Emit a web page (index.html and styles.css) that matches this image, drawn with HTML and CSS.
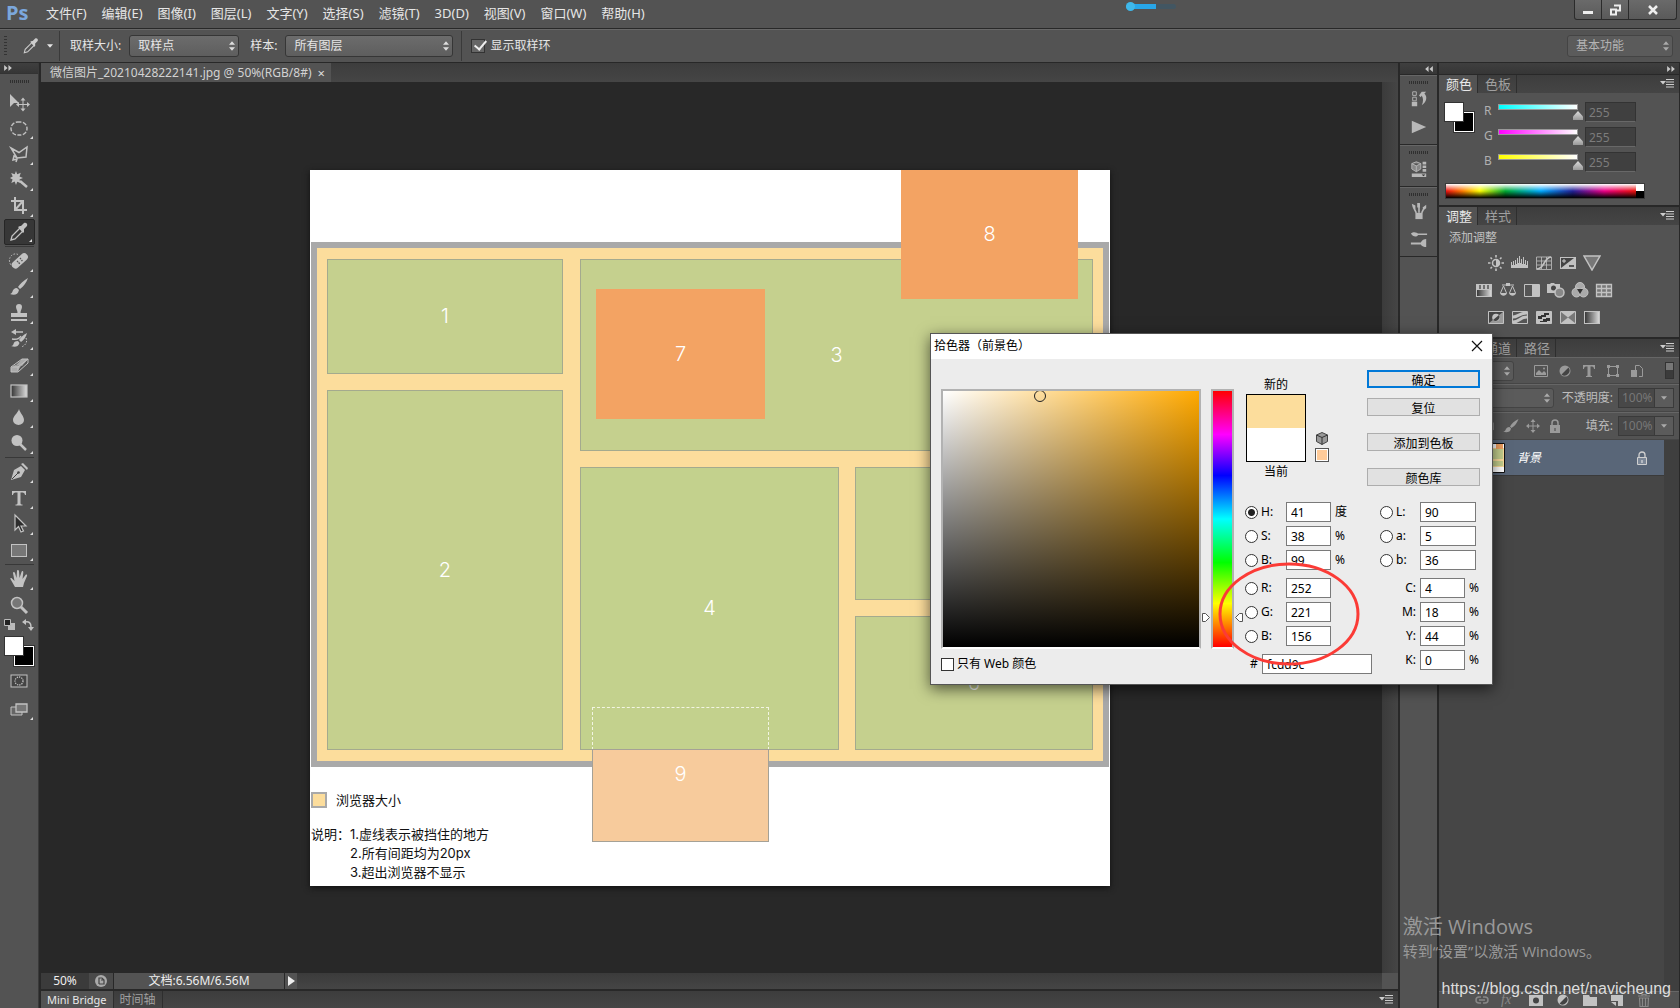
FILE: index.html
```html
<!DOCTYPE html>
<html lang="zh-CN">
<head>
<meta charset="utf-8">
<title>微信图片_20210428222141.jpg @ 50%(RGB/8#)</title>
<link rel="stylesheet" href="styles.css">
</head>
<body>
<svg class="sprite" aria-hidden="true">
  <defs>
    <linearGradient id="g-fade"><stop offset="0" stop-color="#333"/><stop offset="1" stop-color="#ddd"/></linearGradient>
  </defs>
  <symbol id="updown" viewBox="0 0 7 11"><path d="M3.500 0 7 4H0zM3.500 11 7 7H0z" fill="currentColor"/></symbol>
  <symbol id="down" viewBox="0 0 7 4"><path d="M0 0h7L3.500 4z" fill="currentColor"/></symbol>
  <symbol id="dbl-right" viewBox="0 0 9 7"><path d="M0 0l4 3.500L0 7zM5 0l4 3.500L5 7z" fill="currentColor"/></symbol>
  <symbol id="dbl-left" viewBox="0 0 9 7"><path d="M4 0L0 3.500 4 7zM9 0L5 3.500 9 7z" fill="currentColor"/></symbol>
  <symbol id="panel-menu" viewBox="0 0 14 9"><path d="M0 2h6L3 5.500zM6 0h8v1H6zM6 2.500h8v1H6zM6 5h8v1H6zM6 7.500h8v1H6z" fill="currentColor"/></symbol>

  <symbol id="move" viewBox="0 0 24 24"><path d="M3 4v13l4-4h5z" fill="currentColor"/><path d="M16 9v11M10.500 14.500h11" stroke="currentColor" fill="none"/><path d="M16 7.500l2.500 3h-5zM16 21.500l2.500-3h-5zM9 14.500l3-2.500v5zM23 14.500l-3-2.500v5z" fill="currentColor"/></symbol>
  <symbol id="ellipse" viewBox="0 0 24 24"><rect x="4" y="6" width="16" height="13" rx="6.500" fill="none" stroke="currentColor" stroke-width="1.400" stroke-dasharray="4 1.500"/></symbol>
  <symbol id="lasso" viewBox="0 0 24 24"><path d="M4 6l8 4.500L20 5l-1 10-9 1zM10 16l-3-2-1 4 4-1-1 3" fill="none" stroke="currentColor" stroke-width="1.500"/></symbol>
  <symbol id="wand" viewBox="0 0 24 24"><path d="M9 3l1.200 3.300 3.600-1.500-1.300 3.600 3.500 1.600-3.500 1.600 1 3.400-3.300-1.300L9 17l-1.300-3.500L4.300 15l1.300-3.600L3 10l2.700-1.500L4.200 5l3.500 1.300z" fill="currentColor"/><path d="M13 13l7 6" stroke="currentColor" stroke-width="2.500"/></symbol>
  <symbol id="crop" viewBox="0 0 24 24"><path d="M8 3v13h12M4 7h12v13M8 16l8-9" fill="none" stroke="currentColor" stroke-width="2"/></symbol>
  <symbol id="dropper" viewBox="0 0 24 24"><path d="M4 20l1-4 8-8 3 3-8 8z" fill="none" stroke="currentColor" stroke-width="1.300"/><path d="M11 7l2-1 1 0 3-3c2-1 4 1 3 3l-3 3v3l-1 1z" fill="currentColor"/></symbol>
  <symbol id="heal" viewBox="0 0 24 24"><path d="M11 5.500a6 6.500 0 1 0-5 12" fill="none" stroke="currentColor" stroke-dasharray="1.500 1.500"/><rect x="3.500" y="8" width="19" height="7.500" rx="3.700" transform="rotate(-42 13 12)" fill="currentColor"/><path d="M10 12l3 3M13 9l3 4M11.500 13.500l.5.5" stroke="#555" stroke-width="1.300" stroke-dasharray="1.500 1"/></symbol>
  <symbol id="brush" viewBox="0 0 24 24"><path d="M21 3c-5 3-8 6-10 9l2 2c4-3 6-6 8-11zM10 13c-3 0-4 2-4.500 3.500S4 19 3 19c4 1.500 8 1 9-4z" fill="currentColor"/></symbol>
  <symbol id="stamp" viewBox="0 0 24 24"><path d="M12 3a3 3 0 0 1 3 3c0 2-1.500 3-1.500 6H20v4H4v-4h6.500C10.500 9 9 8 9 6a3 3 0 0 1 3-3zM4 18h16v2H4z" fill="currentColor"/></symbol>
  <symbol id="history" viewBox="0 0 24 24"><path d="M20 6c-4 2-6 4-8 7l2 2c3-2 5-5 6-9zM11 14c-3 0-4 1-4.500 3S4 19 4 19c4 1.500 7 1 8.500-3z" fill="currentColor"/><path d="M16 5H8M5 12c6 1 8-1 9-3" fill="none" stroke="currentColor" stroke-width="1.500"/><path d="M4 5l5-3v6z" fill="currentColor"/><path d="M19 11c2 4-1 8-5 9" fill="none" stroke="currentColor" stroke-dasharray="1.500 1.500"/></symbol>
  <symbol id="eraser" viewBox="0 0 24 24"><path d="M9 12l6-6h6l-6 7zM4 15l4-3 6 1-4 6H4z" fill="#aaa"/><path d="M4 14l11-8h6v4l-10 9H4zM4 14h7l10-8M11 14v5" fill="none" stroke="currentColor"/></symbol>
  <symbol id="gradient" viewBox="0 0 24 24"><rect x="4" y="6" width="16" height="12" fill="url(#g-fade)" stroke="currentColor" stroke-width="1.200"/></symbol>
  <symbol id="blur" viewBox="0 0 24 24"><path d="M12 4c1 4 5 7 5 11a5.500 5 0 0 1-11 0c0-4 5-7 6-11z" fill="currentColor"/></symbol>
  <symbol id="dodge" viewBox="0 0 24 24"><circle cx="10" cy="9.500" r="5.500" fill="currentColor"/><path d="M13 13l6 6" stroke="currentColor" stroke-width="2.500"/></symbol>
  <symbol id="pen" viewBox="0 0 24 24"><path d="M4 20l3-10 7-4 4 4-4 7zM14 4l2-1 5 5-1 2z" fill="currentColor"/><path d="M5 19l6-6" stroke="#444"/><circle cx="11.500" cy="12.500" r="1.300" fill="#444"/></symbol>
  <symbol id="type" viewBox="0 0 24 24"><path d="M5 5h14v4h-1c-.5-2-1-2.500-4.500-2.500V17c0 1.500.5 1.500 2 1.500v1h-7v-1c1.500 0 2 0 2-1.500V6.500C7 6.500 6.500 7 6 9H5z" fill="currentColor"/></symbol>
  <symbol id="select" viewBox="0 0 24 24"><path d="M8 3v15l3.500-3.500L14 20l2.500-1-2.500-5h5z" fill="#2d2d2d" stroke="currentColor" stroke-width="1.200"/></symbol>
  <symbol id="rect" viewBox="0 0 24 24"><rect x="4.500" y="6.500" width="15" height="12" fill="#777" stroke="currentColor"/></symbol>
  <symbol id="hand" viewBox="0 0 24 24"><path d="M8 20l-4-7c-1.500-2 0-2.500 1-1.500L7.500 14 6 6c0-1.500 1.500-1.500 2 0l1.500 5L10 4c0-1.500 1.800-1.500 2 0l.5 7L14.500 5c.5-1.500 2-1 1.800.5L15.500 12l3-4c1-1 2 0 1.500 1l-3 7-1 4z" fill="currentColor"/></symbol>
  <symbol id="zoomt" viewBox="0 0 24 24"><circle cx="10" cy="10" r="5.500" fill="#777" stroke="currentColor" stroke-width="1.500"/><path d="M14 14l6 6" stroke="currentColor" stroke-width="3"/></symbol>
  <symbol id="mask" viewBox="0 0 24 24"><rect x="4" y="6" width="16" height="12" fill="#444" stroke="currentColor"/><circle cx="12" cy="12" r="4" fill="none" stroke="currentColor" stroke-width="1.300" stroke-dasharray="1.300 1"/></symbol>
  <symbol id="screen" viewBox="0 0 24 24"><path d="M4 10h11v8H4z" fill="#666" stroke="currentColor"/><path d="M9 7h11v8H9z" fill="#777" stroke="currentColor" stroke-width="1.300"/></symbol>

  <symbol id="actions" viewBox="0 0 20 20"><path d="M3 2h4v4H3zM3 8h4v4H3z" fill="none" stroke="currentColor"/><path d="M2 13h6v5H2zM10 6l3-4 5 0-2 2c4 4 2 10-3 13 2-4 2-8 0-11l-1 2z" fill="currentColor"/></symbol>
  <symbol id="play" viewBox="0 0 20 20"><path d="M2 3l16 7-16 7z" fill="currentColor"/></symbol>
  <symbol id="props" viewBox="0 0 20 20"><path d="M7 2l5 2v6l-5 3-5-3V4zM2 4l5 2.500L12 4M7 6.500V13" fill="#888" stroke="currentColor"/><path d="M14 2h4v3h-4zM14 6h4v3h-4zM14 10h4v3h-4zM2 15h16v4H2z" fill="currentColor"/><path d="M13 16h4l-2 2z" fill="#333"/></symbol>
  <symbol id="brushes" viewBox="0 0 20 20"><path d="M6 12h8v7H6z" fill="currentColor"/><path d="M7 12L4 6M10 12V2M13 12l3-6" stroke="currentColor" stroke-width="1.800"/><path d="M2 2l4 2v4L3 6zM14 6l4-3v4l-3 2zM8 1h3v5H8z" fill="currentColor"/></symbol>
  <symbol id="presets" viewBox="0 0 20 20"><path d="M1 4c3-3 7-1 8 0h10v1.500H9c-2 3-6 2-8-1.500zM1 14h11c1-3 4-4 6-4v9c-2 0-5-1-6-3H1z" fill="currentColor"/></symbol>

  <symbol id="a-sun" viewBox="0 0 18 16"><circle cx="9" cy="8" r="3.500" fill="none" stroke="currentColor" stroke-width="1.500"/><path d="M9 4.500a3.500 3.500 0 0 1 0 7z" fill="currentColor"/><path d="M9 0v2.500M9 13.500V16M1 8h2.500M14.500 8H17M3.500 2.500l1.500 1.500M13 12l1.500 1.500M3.500 13.500L5 12M13 4l1.500-1.500" stroke="currentColor" stroke-width="1.600"/></symbol>
  <symbol id="a-levels" viewBox="0 0 18 16"><path d="M0 13V7h1v3h1V6h1v4h1V5h1v4h1V3h1v5h1V1h1v7h1V4h1v5h1V2h1v7h1V5h1v5h1V6h1v7z" fill="currentColor"/></symbol>
  <symbol id="a-curves" viewBox="0 0 18 16"><path d="M1.500 2v12.500h15V2zM6.500 2v12M11.500 2v12M2 6h14M2 10h14" fill="none" stroke="currentColor" stroke-width=".8"/><path d="M2 14C10 14 8 3 16 2" fill="none" stroke="currentColor" stroke-width="1.700"/></symbol>
  <symbol id="a-expo" viewBox="0 0 18 16"><path d="M1 2h16v12H1z" fill="currentColor"/><path d="M2 13V3h13z" fill="#444"/><path d="M3 6h4M5 4v4" stroke="#ccc"/><path d="M10 11h5" stroke="#333" stroke-width="1.500"/></symbol>
  <symbol id="a-vib" viewBox="0 0 18 16"><path d="M1 1h16L9 15z" fill="#777" stroke="currentColor" stroke-width="1.500"/></symbol>
  <symbol id="a-hue" viewBox="0 0 18 16"><rect x="1.500" y="2.500" width="15" height="12" fill="url(#g-fade)" stroke="currentColor"/><path d="M1 2h16v6H1z" fill="currentColor"/><path d="M5 3v4M9 3v4M13 3v4" stroke="#555" stroke-width="1.500"/></symbol>
  <symbol id="a-balance" viewBox="0 0 18 16"><path d="M9 1v3M3 3h12M4.500 4L1.500 11M4.500 4l3 7M13.500 4l-3 7M13.500 4l3 7" stroke="currentColor" fill="none"/><path d="M1 11h7c-1 3.500-6 3.500-7 0zM10 11h7c-1 3.500-6 3.500-7 0zM7 1h4v3H7z" fill="currentColor"/></symbol>
  <symbol id="a-bw" viewBox="0 0 18 16"><path d="M1.500 2.500h15v12h-15z" fill="#555" stroke="currentColor"/><path d="M9 3h7v11H9z" fill="currentColor"/></symbol>
  <symbol id="a-photo" viewBox="0 0 18 16"><path d="M0 2h3l1-1h3l1 1h5v9H0z" fill="currentColor"/><circle cx="6.500" cy="6" r="2.500" fill="#444"/><circle cx="12.500" cy="10.500" r="4.500" fill="#888" stroke="currentColor" stroke-width="1.500"/></symbol>
  <symbol id="a-mix" viewBox="0 0 18 16"><g fill="#aaa" stroke="currentColor"><circle cx="9" cy="5" r="4.500"/><circle cx="5.500" cy="10.500" r="4.500"/><circle cx="12.500" cy="10.500" r="4.500"/></g><path d="M6 7h6l-3 5z" fill="#333"/></symbol>
  <symbol id="a-lut" viewBox="0 0 18 16"><path d="M1.500 2.500h15v12h-15zM6.500 2v12M11.500 2v12M2 6.500h14M2 10.500h14" fill="#777" stroke="currentColor" stroke-width="1.300"/></symbol>
  <symbol id="a-invert" viewBox="0 0 18 16"><path d="M1.500 2.500h15v12h-15z" fill="#999" stroke="currentColor"/><path d="M2 14L16 3H2z" fill="#444"/><circle cx="9" cy="8.500" r="3.800" fill="currentColor"/><path d="M6 11l6-5a4 4 0 0 1-6 5z" fill="#444"/></symbol>
  <symbol id="a-poster" viewBox="0 0 18 16"><path d="M1.500 2.500h15v12h-15z" fill="#555" stroke="currentColor"/><path d="M2 8c5 0 6-4 14-4" stroke="currentColor" stroke-width="3" fill="none"/><path d="M2 13c6 0 7-5 14-5" stroke="currentColor" stroke-width="3" fill="none"/></symbol>
  <symbol id="a-thresh" viewBox="0 0 18 16"><path d="M1.500 2.500h15v12h-15z" fill="currentColor" stroke="currentColor"/><path d="M3 7h3V6h3V4h5v2h-3v2H7v2H3zM5 12h3v-2h3V9h4v3h-3v1H5z" fill="#333"/></symbol>
  <symbol id="a-sel" viewBox="0 0 18 16"><path d="M1.500 2.500h15v12h-15z" fill="#777" stroke="currentColor"/><path d="M2 3l7 5.500L16 3zM2 14l7-5.500 7 5.500z" fill="currentColor"/></symbol>
  <symbol id="a-map" viewBox="0 0 18 16"><rect x="1.500" y="2.500" width="15" height="12" fill="url(#g-fade)" stroke="currentColor"/></symbol>

  <symbol id="l-img" viewBox="0 0 16 14"><path d="M1.500 1.500h13v11h-13z" fill="none" stroke="currentColor"/><path d="M3 11V9l3-3 3 3 2-2 2 2v2z" fill="currentColor"/><circle cx="11" cy="4.500" r="1" fill="currentColor"/></symbol>
  <symbol id="l-adj" viewBox="0 0 16 14"><circle cx="8" cy="7" r="5.500" fill="currentColor"/><path d="M4.500 10.500l7-7a5 5 0 0 1-7 7z" fill="#444"/></symbol>
  <symbol id="l-type" viewBox="0 0 16 14"><path d="M2 1h12v4h-1c0-2-1-2.500-3.500-2.500V11c0 1 .5 1 1.500 1v1H5v-1c1 0 1.500 0 1.500-1V2.500C4 2.500 3 3 3 5H2z" fill="currentColor"/></symbol>
  <symbol id="l-shape" viewBox="0 0 16 14"><path d="M3.500 2.500h9v9h-9z" fill="none" stroke="currentColor"/><path d="M2 1h3v3H2zM11 1h3v3h-3zM2 10h3v3H2zM11 10h3v3h-3z" fill="currentColor"/></symbol>
  <symbol id="l-smart" viewBox="0 0 16 14"><path d="M6.500 7V1.500h4l3 3v8H10" fill="none" stroke="currentColor"/><path d="M2 6h6v7H2z" fill="currentColor"/></symbol>
  <symbol id="l-brush" viewBox="0 0 16 14"><path d="M15.500 0C11 2 8.500 5 7 7.500L8.500 9C12 7 14 4 15.500 0zM6.500 8C4 8 3 9.500 2.500 11S1 12.500 0 12.500C3 14 7.500 13.500 8 9.500z" fill="currentColor"/></symbol>
  <symbol id="l-lock" viewBox="0 0 16 14"><path d="M3 6h10v8H3z" fill="currentColor"/><path d="M5 6V4c0-4 6-4 6 0v2" fill="none" stroke="currentColor" stroke-width="1.500"/><path d="M7.500 9h1v3h-1z" fill="#444"/></symbol>
  <symbol id="l-locked" viewBox="0 0 16 14"><path d="M3.500 6.500h9v7h-9z" fill="#7c8797" stroke="currentColor"/><path d="M5 6V4c0-4 6-4 6 0v2" fill="none" stroke="currentColor" stroke-width="1.300"/><path d="M7.500 9h1v3h-1z" fill="#eee"/></symbol>
  <symbol id="l-move" viewBox="0 0 16 14"><path d="M8 2v10M3 7h10" stroke="currentColor"/><path d="M8 0l2.500 3h-5zM8 14l2.500-3h-5zM1 7l3-2.500v5zM15 7l-3-2.500v5z" fill="currentColor"/></symbol>
  <symbol id="l-link" viewBox="0 0 16 14"><path d="M7 4H5a3 3 0 0 0 0 6h2M9 4h2a3 3 0 0 1 0 6H9M5 7h6" fill="none" stroke="currentColor" stroke-width="1.500"/></symbol>
  <symbol id="l-mask" viewBox="0 0 16 14"><path d="M1 2h14v11H1z" fill="currentColor"/><circle cx="8" cy="7.500" r="3" fill="#444"/></symbol>
  <symbol id="l-folder" viewBox="0 0 16 14"><path d="M1 2h6l1 2h7v9H1z" fill="currentColor"/></symbol>
  <symbol id="l-new" viewBox="0 0 16 14"><path d="M2 2h12v11H9V8H2z" fill="currentColor"/><path d="M2 9h5v4z" fill="currentColor"/></symbol>
  <symbol id="l-trash" viewBox="0 0 16 14"><path d="M2 3h12M6 3V1.500h4V3M3.500 5l.5 8.500h8l.5-8.500zM6.500 5v8M9.500 5v8" fill="none" stroke="currentColor" stroke-width="1.200"/></symbol>
</svg>

<div class="app">
  <header class="menubar">
    <span class="logo">Ps</span>
    <nav class="menus">
      <button>文件(F)</button><button>编辑(E)</button><button>图像(I)</button><button>图层(L)</button><button>文字(Y)</button><button>选择(S)</button><button>滤镜(T)</button><button>3D(D)</button><button>视图(V)</button><button>窗口(W)</button><button>帮助(H)</button>
    </nav>
    <div class="win-buttons">
      <button aria-label="最小化"><svg width="12" height="12" viewBox="0 0 12 12"><path d="M1 7h10v3H1z" fill="#eee"/></svg></button>
      <button aria-label="还原"><svg width="12" height="12" viewBox="0 0 12 12"><path d="M5 1.500h6v5H8M2 5.500h5v5H2z" fill="none" stroke="#eee" stroke-width="2"/></svg></button>
      <button class="wide" aria-label="关闭"><svg width="12" height="12" viewBox="0 0 12 12"><path d="M2 2l8 8M10 2l-8 8" stroke="#eee" stroke-width="2.500"/></svg></button>
    </div>
    <div class="progress"><i></i></div>
  </header>

  <div class="options">
    <span class="grip-v"></span>
    <svg class="opt-tool" width="20" height="20"><use href="#dropper"/></svg>
    <svg class="opt-caret" width="6" height="4"><use href="#down"/></svg>
    <span class="opt-sep"></span>
    <label for="size">取样大小:</label>
    <span class="drop size"><select id="size"><option>取样点</option></select><svg width="6" height="10"><use href="#updown"/></svg></span>
    <label for="sample">样本:</label>
    <span class="drop sample"><select id="sample"><option>所有图层</option></select><svg width="6" height="10"><use href="#updown"/></svg></span>
    <span class="opt-sep"></span>
    <label class="ring"><input type="checkbox" checked>显示取样环</label>
    <span class="drop space"><select aria-label="工作区"><option>基本功能</option></select><svg width="6" height="10"><use href="#updown"/></svg></span>
  </div>

  <div class="work">
    <aside class="toolbar">
      <div class="dock-head"><svg width="8" height="6"><use href="#dbl-right"/></svg></div>
      <div class="grip"></div>
      <button class="tool" aria-label="移动"><svg><use href="#move"/></svg></button>
      <button class="tool more" aria-label="选框"><svg><use href="#ellipse"/></svg></button>
      <button class="tool more" aria-label="套索"><svg><use href="#lasso"/></svg></button>
      <button class="tool more" aria-label="魔棒"><svg><use href="#wand"/></svg></button>
      <button class="tool more" aria-label="裁剪"><svg><use href="#crop"/></svg></button>
      <button class="tool more on" aria-label="吸管"><svg><use href="#dropper"/></svg></button>
      <hr>
      <button class="tool more" aria-label="修复"><svg><use href="#heal"/></svg></button>
      <button class="tool more" aria-label="画笔"><svg><use href="#brush"/></svg></button>
      <button class="tool more" aria-label="图章"><svg><use href="#stamp"/></svg></button>
      <button class="tool more" aria-label="历史画笔"><svg><use href="#history"/></svg></button>
      <button class="tool more" aria-label="橡皮擦"><svg><use href="#eraser"/></svg></button>
      <button class="tool more" aria-label="渐变"><svg><use href="#gradient"/></svg></button>
      <button class="tool more" aria-label="模糊"><svg><use href="#blur"/></svg></button>
      <button class="tool more" aria-label="减淡"><svg><use href="#dodge"/></svg></button>
      <hr>
      <button class="tool more" aria-label="钢笔"><svg><use href="#pen"/></svg></button>
      <button class="tool more" aria-label="文字"><svg><use href="#type"/></svg></button>
      <button class="tool more" aria-label="路径选择"><svg><use href="#select"/></svg></button>
      <button class="tool more" aria-label="矩形"><svg><use href="#rect"/></svg></button>
      <hr>
      <button class="tool more" aria-label="抓手"><svg><use href="#hand"/></svg></button>
      <button class="tool" aria-label="缩放"><svg><use href="#zoomt"/></svg></button>
      <div class="mini">
        <svg width="11" height="11" viewBox="0 0 11 11"><path d="M4 4h7v7H4z" fill="#bbb"/><path d="M.5.500h6v6h-6z" fill="#222" stroke="#bbb"/></svg>
        <svg width="12" height="12" viewBox="0 0 12 12"><path d="M3 3c4-1 6 1 6 5" fill="none" stroke="#c4c4c4" stroke-width="1.500"/><path d="M0 3l4-3v6zM9 12l-3-4h6z" fill="#c4c4c4"/></svg>
      </div>
      <div class="swatches"><i class="bg"></i><i class="fg"></i></div>
      <button class="tool" aria-label="快速蒙版"><svg><use href="#mask"/></svg></button>
      <button class="tool more" aria-label="屏幕模式"><svg><use href="#screen"/></svg></button>
    </aside>

    <main class="center">
      <div class="tabbar doc-tabs"><div class="doc-tab"><span>微信图片_20210428222141.jpg @ 50%(RGB/8#)</span><button aria-label="关闭">×</button></div></div>
      <div class="stage">
        <div class="viewport">
          <section class="artboard">
            <div class="board">
              <div class="col-left"><div class="cell c1">1</div><div class="cell c2">2</div></div>
              <div class="col-right">
                <div class="cell c3">3</div>
                <div class="lower">
                  <div class="cell c4">4</div>
                  <div class="pair"><div class="cell">5</div><div class="cell">6</div></div>
                </div>
              </div>
            </div>
            <div class="block b7">7</div>
            <div class="block b8">8</div>
            <div class="dashed"></div>
            <div class="block b9">9</div>
            <div class="legend"><i></i>浏览器大小</div>
            <div class="notes"><span>说明：</span><p>1.虚线表示被挡住的地方<br>2.所有间距均为20px<br>3.超出浏览器不显示</p></div>
          </section>
        </div>
        <div class="vscroll"></div>
      </div>
      <div class="status">
        <span class="pct">50%</span>
        <span class="share"><svg width="12" height="12" viewBox="0 0 12 12"><circle cx="6" cy="6" r="6" fill="#aaa"/><path d="M4 9V3h3l2 2v4H4M6 5h3" fill="none" stroke="#444" stroke-width="1.200"/></svg></span>
        <span class="docsize">文档:6.56M/6.56M</span>
        <button class="go" aria-label="状态菜单"><svg width="7" height="10" viewBox="0 0 7 10"><path d="M0 0l7 5-7 5z" fill="#eee"/></svg></button>
        <span class="hscroll"></span><span class="corner"></span>
      </div>
      <div class="tabbar bottom-tabs"><button class="on">Mini Bridge</button><button>时间轴</button><svg class="pm" width="14" height="9"><use href="#panel-menu"/></svg></div>
    </main>

    <aside class="dock">
      <div class="strip">
        <div class="dock-head left"><svg width="8" height="6"><use href="#dbl-left"/></svg></div>
        <div class="strip-group"><div class="grip"></div><button aria-label="历史记录"><svg><use href="#actions"/></svg></button><button aria-label="动作"><svg><use href="#play"/></svg></button></div>
        <div class="strip-group"><div class="grip"></div><button aria-label="属性"><svg><use href="#props"/></svg></button></div>
        <div class="strip-group"><div class="grip"></div><button aria-label="画笔"><svg><use href="#brushes"/></svg></button><button aria-label="画笔预设"><svg><use href="#presets"/></svg></button></div>
        <div class="strip-rest"></div>
      </div>
      <div class="panels">
        <div class="dock-head right"><svg width="8" height="6"><use href="#dbl-right"/></svg></div>
        <section class="panel color">
          <div class="tabbar"><button class="on">颜色</button><button>色板</button><svg class="pm" width="14" height="9"><use href="#panel-menu"/></svg></div>
          <div class="color-body">
            <div class="swatches"><i class="bg"></i><i class="fg"></i></div>
            <div class="rgb">
              <label for="r">R</label><input class="rc" type="range" max="255" value="255" aria-label="R"><input id="r" type="text" value="255">
              <label for="g">G</label><input class="gc" type="range" max="255" value="255" aria-label="G"><input id="g" type="text" value="255">
              <label for="b">B</label><input class="bc" type="range" max="255" value="255" aria-label="B"><input id="b" type="text" value="255">
            </div>
          </div>
          <div class="spectrum"><i></i><b></b></div>
        </section>
        <section class="panel adjust">
          <div class="tabbar"><button class="on">调整</button><button>样式</button><svg class="pm" width="14" height="9"><use href="#panel-menu"/></svg></div>
          <p>添加调整</p>
          <div class="adj-row"><svg><use href="#a-sun"/></svg><svg><use href="#a-levels"/></svg><svg><use href="#a-curves"/></svg><svg><use href="#a-expo"/></svg><svg><use href="#a-vib"/></svg></div>
          <div class="adj-row"><svg><use href="#a-hue"/></svg><svg><use href="#a-balance"/></svg><svg><use href="#a-bw"/></svg><svg><use href="#a-photo"/></svg><svg><use href="#a-mix"/></svg><svg><use href="#a-lut"/></svg></div>
          <div class="adj-row"><svg><use href="#a-invert"/></svg><svg><use href="#a-poster"/></svg><svg><use href="#a-thresh"/></svg><svg><use href="#a-sel"/></svg><svg><use href="#a-map"/></svg></div>
        </section>
        <section class="panel layers">
          <div class="tabbar"><button class="on">图层</button><button>通道</button><button>路径</button><svg class="pm" width="14" height="9"><use href="#panel-menu"/></svg></div>
          <div class="lrow filter">
            <span class="drop"><select aria-label="过滤"><option>类型</option></select><svg width="6" height="10"><use href="#updown"/></svg></span>
            <div class="licons"><svg><use href="#l-img"/></svg><svg><use href="#l-adj"/></svg><svg><use href="#l-type"/></svg><svg><use href="#l-shape"/></svg><svg><use href="#l-smart"/></svg></div>
            <span class="toggle"></span>
          </div>
          <div class="lrow">
            <span class="drop"><select aria-label="混合模式"><option>正常</option></select><svg width="6" height="10"><use href="#updown"/></svg></span>
            <label for="op">不透明度:</label><span class="pctbox"><input id="op" type="text" value="100%"><button aria-label="不透明度"><svg width="6" height="4"><use href="#down"/></svg></button></span>
          </div>
          <div class="lrow">
            <div class="licons locks"><svg><use href="#rect"/></svg><svg><use href="#l-brush"/></svg><svg><use href="#l-move"/></svg><svg><use href="#l-lock"/></svg></div>
            <label for="fill">填充:</label><span class="pctbox"><input id="fill" type="text" value="100%"><button aria-label="填充"><svg width="6" height="4"><use href="#down"/></svg></button></span>
          </div>
          <div class="layer-list">
            <div class="layer">
              <svg class="thumb" width="33" height="30" viewBox="0 0 33 30"><path d="M.5.500h32v29h-32z" fill="#fff" stroke="#111"/><path d="M1 5h31v19H1z" fill="#fcdd9c"/><path d="M2 6h8v17H2zM11 6h20v10H11zM11 18h20v5H11z" fill="#c5d08e"/><path d="M24 1h7v5h-7z" fill="#f3a363"/></svg>
              <span>背景</span><svg width="16" height="14"><use href="#l-locked"/></svg>
            </div>
            <div class="lscroll"></div>
          </div>
          <div class="lfoot"><svg class="dim"><use href="#l-link"/></svg><em>fx</em><svg><use href="#l-mask"/></svg><svg><use href="#l-adj"/></svg><svg><use href="#l-folder"/></svg><svg><use href="#l-new"/></svg><svg class="dim"><use href="#l-trash"/></svg></div>
        </section>
      </div>
    </aside>
  </div>

  <div class="activate"><strong>激活 Windows</strong><span>转到“设置”以激活 Windows。</span></div>
  <div class="credit">https://blog.csdn.net/navicheung</div>

  <form class="dialog" role="dialog" aria-label="拾色器">
    <div class="title"><span>拾色器（前景色）</span><button type="button" aria-label="关闭"><svg width="12" height="12" viewBox="0 0 12 12"><path d="M1 1l10 10M11 1L1 11" stroke="#111" stroke-width="1.200"/></svg></button></div>
    <div class="dlg-body">
      <div class="pick">
        <div class="field"><i></i></div>
        <label class="web"><input type="checkbox">只有 Web 颜色</label>
      </div>
      <div class="hue-wrap">
        <svg width="8" height="9" viewBox="0 0 8 9"><path d="M.5.500h3l4 4-4 4h-3z" fill="#fff" stroke="#555"/></svg>
        <div class="hue"></div>
        <svg width="8" height="9" viewBox="0 0 8 9"><path d="M7.500.500h-3l-4 4 4 4h3z" fill="#fff" stroke="#555"/></svg>
      </div>
      <div class="side">
        <div class="top">
          <div class="preview"><span>新的</span><div class="pv"></div><span>当前</span></div>
          <div class="safe"><svg width="12" height="13" viewBox="0 0 12 13"><path d="M6 .5l5.500 2.500v6.500L6 12.500.500 9.500V3z" fill="#999" stroke="#444"/><path d="M.5 3L6 5.500 11.500 3M6 5.500v7" fill="none" stroke="#333"/></svg><i></i></div>
          <div class="btns"><button type="button" class="ok">确定</button><button type="button">复位</button><button type="button" class="spaced">添加到色板</button><button type="button" class="spaced">颜色库</button></div>
        </div>
        <div class="nums">
          <div class="nl">
            <div class="n"><label><input type="radio" name="ch" checked>H:</label><input type="text" aria-label="H" value="41"><span>度</span></div>
            <div class="n"><label><input type="radio" name="ch">S:</label><input type="text" aria-label="S" value="38"><span>%</span></div>
            <div class="n"><label><input type="radio" name="ch">B:</label><input type="text" aria-label="B" value="99"><span>%</span></div>
            <div class="n first"><label><input type="radio" name="ch">R:</label><input type="text" aria-label="R" value="252"></div>
            <div class="n"><label><input type="radio" name="ch">G:</label><input type="text" aria-label="G" value="221"></div>
            <div class="n"><label><input type="radio" name="ch">B:</label><input type="text" aria-label="B" value="156"></div>
            <div class="hex"><label for="hex">#</label><input id="hex" type="text" value="fcdd9c"></div>
          </div>
          <div class="nr">
            <div class="n lab"><label><input type="radio" name="ch">L:</label><input type="text" aria-label="L" value="90"></div>
            <div class="n lab"><label><input type="radio" name="ch">a:</label><input type="text" aria-label="a" value="5"></div>
            <div class="n lab"><label><input type="radio" name="ch">b:</label><input type="text" aria-label="b" value="36"></div>
            <div class="n cmyk first"><label for="c">C:</label><input id="c" type="text" value="4"><span>%</span></div>
            <div class="n cmyk"><label for="m">M:</label><input id="m" type="text" value="18"><span>%</span></div>
            <div class="n cmyk"><label for="y">Y:</label><input id="y" type="text" value="44"><span>%</span></div>
            <div class="n cmyk"><label for="k">K:</label><input id="k" type="text" value="0"><span>%</span></div>
          </div>
        </div>
      </div>
    </div>
    <svg class="mark" width="144" height="106" viewBox="0 0 144 106"><ellipse cx="72" cy="53" rx="69" ry="50" fill="none" stroke="#fb3b36" stroke-width="3"/></svg>
  </form>
</div>
</body>
</html>
```
FILE: styles.css
```css
* { box-sizing: border-box; }
body {
  margin: 0;
  background: #282828;
  color: #e6e6e6;
  font: 12px/16px "Noto Sans", "Noto Sans CJK SC", sans-serif;
}
button, input, select { font: inherit; color: inherit; margin: 0; padding: 0; border: 0; border-radius: 0; background: none; }
p { margin: 0; }
svg { display: block; flex: none; }
i { display: block; }
.sprite { position: absolute; width: 0; height: 0; }

.app { position: relative; display: flex; flex-direction: column; min-height: 100vh; overflow: hidden; background: #282828; }

/* menu bar */
.menubar { position: relative; display: flex; align-items: center; height: 28px; padding: 0 0 2px 6px; background: #535353; }
.logo { width: 32px; color: #7ba7dc; font: bold 20px/26px "Open Sans", sans-serif; }
.menus { display: flex; gap: 15px; padding-left: 8px; font-size: 13px; }
.menus button { height: 26px; white-space: nowrap; }
.win-buttons { display: flex; align-self: flex-start; height: 20px; margin: 0 3px 0 auto; border: 1px solid #2b2b2b; border-top: 0; border-radius: 0 0 3px 3px; background: linear-gradient(#6a6a6a, #5a5a5a); }
.win-buttons button { display: grid; place-items: center; width: 27px; border-right: 1px solid #2b2b2b; }
.win-buttons .wide { width: 47px; border: 0; }
.progress { position: absolute; right: 504px; top: 4px; width: 50px; height: 5px; border-radius: 3px; background: linear-gradient(90deg, #28a6e8 60%, #425662 60%); }
.progress i { width: 9px; height: 9px; margin-top: -2px; border-radius: 50%; background: #3fb8ea; }

/* options bar */
.options { display: flex; align-items: center; height: 33px; margin-top: 1px; padding: 0 7px 0 4px; border-top: 1px solid #686868; background: #535353; white-space: nowrap; }
.grip-v { width: 3px; height: 20px; background: repeating-linear-gradient(#333 0 1px, transparent 1px 3px); }
.opt-tool { margin-left: 14px; color: #ccc; }
.opt-caret { margin: 0 6px; }
.opt-sep { width: 1px; height: 30px; background: #3a3a3a; }
.options label { margin: 0 8px 0 10px; }
.options .ring { display: flex; align-items: center; gap: 5px; margin-left: 9px; }
.ring input { appearance: none; width: 14px; height: 14px; border: 1px solid #333; background: #666; }
.ring input::after { content: ""; display: block; width: 5px; height: 10px; margin: -2px 0 0 5px; border: solid #eee; border-width: 0 2px 2px 0; rotate: 40deg; }
.drop { display: inline-grid; align-items: center; }
.drop > * { grid-area: 1 / 1; }
.drop select { appearance: none; width: 100%; height: 22px; padding-left: 8px; border: 1px solid #363636; border-radius: 3px; background: linear-gradient(#6c6c6c, #5e5e5e); }
.drop svg { justify-self: end; margin-right: 4px; pointer-events: none; color: #ddd; }
.size { width: 110px; margin-right: 1px; }
.sample { width: 168px; margin-right: 8px; }
.space { width: 106px; margin-left: auto; color: #b4b4b4; }
.space select, .layers .drop select { border-color: #444; background: #5b5b5b; }
.space svg, .layers .drop svg { color: #aaa; }

/* work area */
.work { display: flex; flex: 1; margin-top: 1px; }
.dock-head { display: flex; flex: none; align-items: center; height: 11px; margin-bottom: 1px; padding-left: 4px; background: linear-gradient(#3f3f3f, #363636); color: #c8c8c8; }
.grip { width: 20px; height: 3px; margin: 0 auto; background: repeating-linear-gradient(90deg, #2f2f2f 0 1px, transparent 1px 2px); }
.toolbar { width: 39px; padding-left: 1px; margin-right: 2px; background: #535353; border-right: 1px solid #3a3a3a; }
.toolbar .dock-head { margin-left: -1px; border-bottom: 1px solid #333; }
.toolbar > .grip { margin-top: 6px; margin-bottom: 6px; }
.tool { position: relative; display: grid; place-items: center; width: 31px; height: 26px; margin-left: 3px; }
.tool svg { width: 24px; height: 24px; color: #c2c2c2; margin-right: 2px; }
.tool.more::after { content: ""; position: absolute; right: 2px; bottom: 2px; border: solid transparent; border-width: 3px 0 0 3px; border-right: 0; border-bottom: 3px solid #ddd; }
.tool.on { border: 1px solid #262626; border-radius: 2px; background: #373737; }
.toolbar hr { height: 1px; margin: 1px 4px; border: 0; background: #383838; }
.mini { display: flex; gap: 7px; padding: 1px 3px 5px; height: 18px; }
.swatches { position: relative; width: 30px; height: 30px; margin-left: 3px; }
.swatches i { position: absolute; width: 20px; height: 20px; border: 1px solid #333; background: #fff; }
.swatches .bg { right: 0; bottom: 0; background: #000; border-color: #fff; outline: 1px solid #333; }
.swatches + .tool, .toolbar .tool:last-child { margin-top: 2px; }

.center { display: flex; flex: 1; flex-direction: column; min-width: 0; }
.tabbar { display: flex; flex: none; align-items: stretch; height: 18px; background: linear-gradient(#3d3d3d, #454545); color: #a0a0a0; font-size: 13px; }
.tabbar button { padding: 0 5px 0 7px; border-right: 1px solid #2e2e2e; white-space: nowrap; line-height: 16px; }
.tabbar .on { background: #535353; color: #e8e8e8; }
.tabbar .pm { margin: 4px 5px 0 auto; color: #ccc; }
.doc-tabs { height: 19px; font-size: 12px; }
.doc-tab { display: flex; align-items: center; gap: 6px; padding: 0 6px 0 9px; background: #535353; color: #d2d2d2; white-space: nowrap; }
.doc-tab button { padding: 0; border: 0; font-size: 13px; color: #ddd; }
.stage { display: flex; flex: 1; }
.viewport { display: grid; flex: 1; place-content: center; min-width: 0; padding-right: 3px; overflow: hidden; background: #282828; }
.vscroll { width: 16px; background: linear-gradient(90deg, #3b3b3b, #454545); }

/* edited picture */
.artboard { position: relative; width: 800px; height: 716px; padding: 72px 1px 0; background: #fff; color: #111; box-shadow: 0 2px 6px #111; font: 13px/19px Inter, "Noto Sans CJK SC", sans-serif; }
.board { display: flex; gap: 17px; height: 525px; padding: 11px 10px; border: 6px solid #a9a9a9; background: #fcdd9c; }
.col-left { display: flex; flex: none; flex-direction: column; gap: 16px; width: 236px; }
.col-right { display: flex; flex: 1; flex-direction: column; gap: 16px; }
.cell { display: grid; place-items: center; border: 1px solid #a4aa8e; background: #c5d08e; color: #fff; }
.cell, .block { font: 300 20px/24px Inter, "Liberation Sans", sans-serif; }
.c1 { height: 115px; }
.c2 { flex: 1; }
.c3 { height: 192px; }
.lower { display: flex; flex: 1; gap: 16px; }
.c4 { width: 259px; background: #c3d18d; }
.pair { display: grid; flex: 1; gap: 16px; }
.block { position: absolute; display: grid; place-items: center; background: #f3a363; color: #fff; }
.b7 { left: 286px; top: 119px; width: 169px; height: 130px; }
.b8 { left: 591px; top: 0; width: 177px; height: 129px; }
.b9 { left: 282px; top: 579px; width: 177px; height: 93px; padding-bottom: 42px; border: 1px solid #a5a196; background: #f7cb9c; }
.dashed { position: absolute; left: 282px; top: 537px; width: 177px; height: 43px; border: 1px dashed #f2f5e2; border-bottom: 0; }
.legend { display: flex; align-items: center; gap: 9px; margin-top: 25px; line-height: 16px; }
.legend i { width: 16px; height: 16px; border: 2px solid #a9a9a9; background: #fcdd9c; }
.notes { display: flex; margin-top: 17px; }
.notes span { width: 39px; }

/* status bar */
.status { display: flex; height: 16px; margin-bottom: 2px; line-height: 15px; color: #eee; }
.pct { width: 48px; background: #3b3b3b; text-align: center; }
.share { display: grid; place-items: center; width: 24px; background: #4a4a4a; }
.docsize { width: 170px; margin-left: 1px; background: #535353; text-align: center; }
.go { display: grid; place-items: center; width: 12px; margin-left: 1px; background: #535353; }
.hscroll { flex: 1; background: linear-gradient(#3b3b3b, #454545); }
.corner { width: 16px; background: #535353; }
.bottom-tabs { height: 17px; }
.bottom-tabs button { font-size: 12px; padding: 0 6px; }
.bottom-tabs .on { font-size: 11px; }

/* dock */
.dock { display: flex; gap: 2px; width: 280px; margin-left: 2px; padding-right: 1px; }
.strip { display: flex; flex-direction: column; width: 37px; color: #b8b8b8; }
.dock-head.left, .dock-head.right { justify-content: flex-end; padding-right: 4px; }
.strip-group { display: flex; flex-direction: column; align-items: center; gap: 8px; margin-bottom: 1px; padding: 5px 0 7px; background: #535353; border-top: 1px solid #666; }
.strip-group button { width: 20px; height: 20px; }
.strip-group .grip { margin-bottom: -3px; }
.strip-group svg { width: 18px; height: 18px; margin-left: 1px; }
.strip-rest { flex: 1; background: #535353; }
.panels { display: flex; flex: 1; flex-direction: column; }
.panel { background: #535353; }
.color { height: 130px; margin-bottom: 2px; }
.adjust { height: 130px; margin-bottom: 2px; color: #c2c2c2; }
.color-body { display: flex; gap: 10px; padding: 9px 0 0 5px; height: 90px; }
.color-body .swatches { flex: none; margin: 0; }
.rgb { display: grid; grid-template-columns: 9px 92px 51px; align-content: start; row-gap: 5px; color: #b0b0b0; }
.rgb label { line-height: 18px; }
.rgb input[type=text] { width: 51px; height: 20px; padding-left: 3px; border: 1px solid #333; border-bottom-color: #686868; background: #404040; color: #7c7c7c; }
.rc { --c: #0ff; }
.gc { --c: #f0f; }
.bc { --c: #ff0; }
.rgb input[type=range] { appearance: none; width: 90px; height: 20px; background: linear-gradient(90deg, var(--c), #fff) 6px 3px / 78px 4px no-repeat, linear-gradient(#999, #999) 5px 2px / 80px 6px no-repeat; }
.rgb input::-webkit-slider-runnable-track { height: 20px; }
.rgb input::-webkit-slider-thumb { appearance: none; width: 10px; height: 9px; margin-top: 9px; background: linear-gradient(#ddd, #999); clip-path: polygon(50% 0, 100% 60%, 100% 100%, 0 100%, 0 60%); }
.spectrum { display: grid; grid-template-columns: 1fr 8px; grid-template-rows: 1fr 1fr; width: 200px; height: 16px; margin-left: 6px; border: 1px solid #3a3a3a; background: linear-gradient(#fff, #fff0 50%, #0000 50%, #000), linear-gradient(90deg, #e11, #f70 8%, #ff0 17%, #0a3 30%, #0af 48%, #229 64%, #e08 80%, #e11 95%); }
.spectrum i { grid-column: 2; background: #fff; }
.spectrum b { grid-column: 2; background: #000; }
.adjust p { padding: 5px 0 9px 10px; line-height: 16px; }
.adj-row { display: flex; justify-content: center; gap: 6px; height: 27px; padding-right: 30px; }
.adj-row svg { width: 18px; height: 16px; }
.layers { display: flex; flex: 1; flex-direction: column; background: #464646; }
.lrow { display: flex; align-items: center; height: 27px; margin-bottom: 1px; padding: 0 5px; background: #535353; border-top: 1px solid #666; color: #bdbdbd; white-space: nowrap; }
.filter { height: 26px; }
.lrow .drop { width: 110px; }
.lrow .drop select { height: 20px; }
.lrow.filter .drop { width: 70px; }
.licons { display: flex; gap: 8px; margin-left: 19px; color: #9a9a9a; }
.licons svg { width: 16px; height: 14px; }
.locks { gap: 6px; margin-left: 37px; }
.lrow label { margin: 0 5px 0 auto; }
.toggle { width: 9px; height: 17px; margin-left: auto; border: 1px solid #333; background: linear-gradient(#777 45%, #3b3b3b 45%); }
.pctbox { display: flex; width: 56px; height: 20px; border: 1px solid #3a3a3a; }
.pctbox input { width: 35px; padding-left: 3px; background: #484848; color: #777; }
.pctbox button { display: grid; flex: 1; place-items: center; border-left: 1px solid #3a3a3a; background: #5b5b5b; color: #aaa; }
.layer-list { display: flex; flex: 1; align-items: flex-start; }
.layer { display: flex; flex: 1; align-items: center; height: 36px; padding: 0 14px 0 33px; border-bottom: 1px solid #3a3a3a; background: #596678; color: #d0d0d0; }
.layer span { margin: 0 auto 0 12px; color: #fff; font-style: italic; }
.lscroll { align-self: stretch; width: 15px; background: #3f3f3f; }
.lfoot { display: flex; align-items: center; justify-content: center; gap: 11px; height: 17px; padding-left: 8px; background: #535353; border-top: 1px solid #666; color: #c2c2c2; }
.lfoot svg { width: 16px; height: 14px; }
.lfoot em { width: 16px; font: italic 14px/14px "Liberation Serif", serif; color: #888; }
.lfoot .dim { color: #888; }

/* desktop overlays */
.activate { position: absolute; right: 79px; bottom: 47px; color: #999; font-family: "Open Sans", "Noto Sans CJK SC", sans-serif; white-space: nowrap; }
.activate strong { display: block; font-weight: 400; font-size: 20px; line-height: 28px; }
.activate span { display: block; font-size: 15px; line-height: 20px; }
.credit { position: absolute; right: 9px; bottom: 9px; color: #ddd; font: 16px/20px "Liberation Sans", Arial, sans-serif; }

/* color picker window */
.dialog { position: absolute; left: 930px; top: 333px; width: 563px; border: 1px solid #555; background: #ececec; color: #000; box-shadow: 0 4px 14px #0009; }
.title { display: flex; align-items: center; justify-content: space-between; height: 25px; padding: 0 9px 2px 3px; background: #fff; }
.dlg-body { display: flex; padding: 11px 12px 10px 10px; }
.pick, .hue-wrap { margin-top: 19px; }
.field { width: 260px; height: 260px; padding-left: 91px; border: 2px solid #b2b2b2; border-bottom-color: #fff; background: linear-gradient(#0000, #000), linear-gradient(90deg, #fff, #ffa900); background-clip: padding-box; overflow: hidden; }
.field i { width: 12px; height: 12px; margin-top: -1px; border: 1px solid #222; border-radius: 50%; }
.web { display: flex; align-items: center; gap: 3px; margin-top: 7px; }
.web input { appearance: none; width: 13px; height: 13px; border: 1px solid #333; background: #fff; }
.hue-wrap { display: flex; gap: 1px; width: 44px; height: 260px; padding-left: 1px; }
.hue-wrap svg { margin-top: 224px; }
.hue { width: 23px; border: 2px solid #b2b2b2; border-bottom-color: #fff; background: linear-gradient(red, #f0f 17%, #00f 33%, #0ff 50%, #0f0 67%, #ff0 83%, red); background-clip: padding-box; }
.side { flex: 1; }
.top { display: flex; height: 132px; padding-left: 1px; }
.preview { width: 60px; padding-top: 5px; text-align: center; }
.preview span { display: block; height: 19px; line-height: 20px; }
.pv { height: 68px; border: 1px solid #000; background: linear-gradient(#fcdd9c 50%, #fff 50%); }
.safe { display: grid; gap: 3px; align-content: start; justify-items: center; width: 16px; margin: 62px 0 0 8px; }
.safe i { width: 14px; height: 14px; border: 1px solid #555; background: #ffcb99; box-shadow: inset 0 0 0 1px #fff; }
.btns { display: flex; flex-direction: column; gap: 10px; width: 113px; margin-left: auto; }
.btns button { height: 18px; padding-top: 2px; border: 1px solid #adadad; background: #e1e1e1; line-height: 16px; }
.btns .ok { border: 2px solid #0078d7; line-height: 14px; }
.btns .spaced { margin-top: 7px; }
.nums { display: flex; justify-content: space-between; }
.n { display: flex; align-items: center; height: 20px; margin-bottom: 4px; }
.n.first { margin-top: 8px; }
.n label { display: flex; align-items: center; gap: 3px; width: 41px; }
.n input[type=text], .hex input { width: 45px; height: 20px; padding-left: 4px; border: 1px solid #7a7a7a; background: #fff; }
.n span { margin-left: 4px; }
.n input[type=radio] { appearance: none; width: 13px; height: 13px; border: 1px solid #333; border-radius: 50%; background: #fff; }
.n input[type=radio]:checked { background: radial-gradient(#222 0 3px, #fff 4px); }
.nr { width: 100px; }
.n.lab label { width: 40px; }
.n.lab input[type=text] { width: 56px; }
.n.cmyk label { justify-content: flex-end; width: 36px; margin-right: 4px; }
.hex { display: flex; align-items: center; gap: 4px; margin-top: 8px; padding-left: 5px; }
.hex label { width: 8px; }
.hex input { width: 110px; }
.mark { position: absolute; left: 286px; top: 227px; pointer-events: none; }
```
